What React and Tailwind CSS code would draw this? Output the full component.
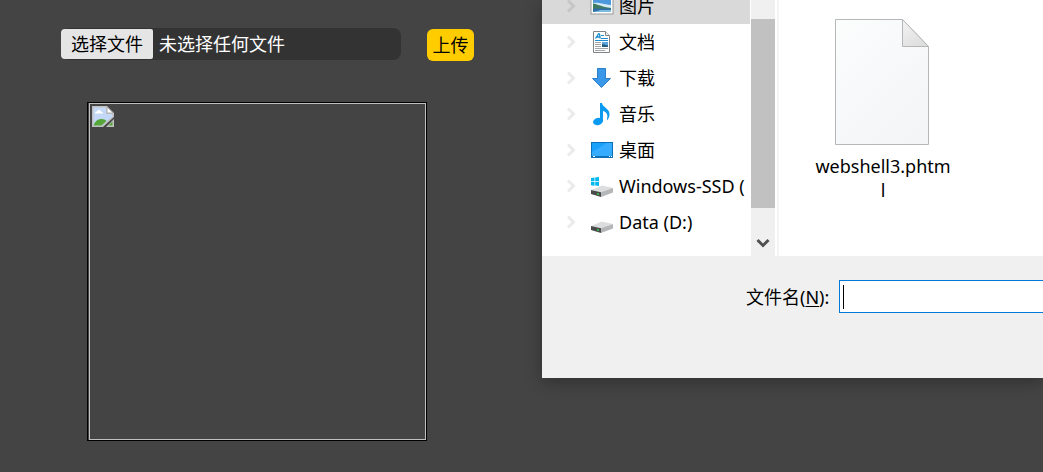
import React, { useState } from 'react';

const PicturesIcon = () => (
  <svg className="h-6 w-6" viewBox="0 0 24 24">
    <rect x="1" y="3" width="22" height="17" fill="#fff" stroke="#9a9a9a" />
    <path d="M3 5h18v13H3z" fill="#4d97dd" />
    <path d="M3 9c5-1 9 1 18 2v3H3z" fill="#d3e9f8" />
    <path d="M3 9.500c4 .5 9 3.500 18 4.500v1H3z" fill="#3f7a63" />
    <path d="M3 14.500h18V18H3z" fill="#2f6ea6" />
    <path d="M3 18l8-2h10v2z" fill="#7dbbe0" />
  </svg>
);

const DocumentsIcon = () => (
  <svg className="h-6 w-6" viewBox="0 0 24 24">
    <path d="M3.500 1.500h12l4 4v17h-16z" fill="#fff" stroke="#7f8488" />
    <path d="M15.500 1.500v4h4" fill="#eee" stroke="#7f8488" />
    <path d="M5.500 8.500l3-4.500h1l.7 4.500M6.700 7h3" fill="none" stroke="#1b8dd0" strokeWidth="1.300" />
    <path d="M11 5.500h3M11 8.500h7M5 10.500h13" stroke="#1b8dd0" />
    <path d="M5 12.500h6M5 14.500h6M5 16.500h6M5 18.500h13M5 20.500h10" stroke="#a3a6a9" />
    <path d="M12 12h6v5h-6z" fill="#5aa3df" />
    <path d="M12 14l6 1.500V17h-6z" fill="#245b7c" />
  </svg>
);

const DownloadsIcon = () => (
  <svg className="h-6 w-6" viewBox="0 0 24 24">
    <path d="M7.500 2.500h8v10h5L11.500 21.500l-9-9h5z" fill="#3b98e8" stroke="#2a7fcb" />
  </svg>
);

const MusicIcon = () => (
  <svg className="h-6 w-6" viewBox="0 0 24 24">
    <ellipse cx="8" cy="19.500" rx="5" ry="3.600" transform="rotate(-15 8 19.500)" fill="#0a9af0" />
    <path
      d="M10 1h2c.4 4 7.500 5.500 7.500 11 0 2.500-1 4.500-2 6-.5-.2-.7-.5-.6-.8 1.200-4 .4-6.700-3.900-8.200V19h-3z"
      fill="#0a9af0"
    />
  </svg>
);

const DesktopIcon = () => (
  <svg className="h-6 w-6" viewBox="0 0 24 24">
    <rect x="1.500" y="4.500" width="21" height="15" fill="#18a0fb" stroke="#0b70b8" />
    <path d="M2 14L17 5h5v13H2z" fill="#35acff" />
    <path d="M2 18.500h20" stroke="#0b70b8" />
    <path d="M3 18.500h2M19 18.500h1M21 18.500h1" stroke="#fff" />
  </svg>
);

const DriveIcon = ({ system = false }) => (
  <svg className="h-6 w-6" viewBox="0 0 24 24">
    <path d="M1 16l11-4.500L23 14l-12 4.500z" fill="#dcdddf" />
    <path d="M1 16l10 2.300v4.700L1 20z" fill="#4a4a4a" />
    <path d="M11 18.300L23 14v4.500L11 23z" fill="#b4b6b8" />
    <path d="M7 19l2 .5v1.500l-2-.5z" fill="#35d04a" />
    {system && <path d="M1 4l3.500-.5v3.700H1zM5.200 3.400L9 3v4.200H5.200zM1 8h3.500v3.700L1 11.200zM5.200 8H9v4l-3.800-.4z" fill="#00b7f0" />}
  </svg>
);

const ChevronIcon = ({ className }) => (
  <svg className={`h-4 w-3 ${className}`} viewBox="0 0 12 16" fill="none" stroke="currentColor" strokeWidth="3">
    <path d="M2 2.500L7.500 8 2 13.500" />
  </svg>
);

const FileIcon = () => (
  <svg className="h-[127px] w-24" viewBox="0 0 96 127">
    <defs>
      <linearGradient id="paper" x1="0" y1="0" x2="0.700" y2="1">
        <stop offset="0" stopColor="#fcfdfd" />
        <stop offset="1" stopColor="#f3f5f7" />
      </linearGradient>
      <linearGradient id="fold" x1="0" y1="0" x2="0.600" y2="1">
        <stop offset="0" stopColor="#f4f4f4" />
        <stop offset="1" stopColor="#dedede" />
      </linearGradient>
    </defs>
    <path d="M.5.5h67l26 27v98H.5z" fill="url(#paper)" stroke="#b4b6b8" />
    <path d="M67.500.5v27h26z" fill="url(#fold)" stroke="#b4b6b8" />
  </svg>
);

const BrokenImageIcon = () => (
  <svg className="h-6 w-6" viewBox="0 0 24 24">
    <path d="M1 1h15l7 7v4L12 22H1z" fill="#c0c0c0" />
    <path d="M2.500 2.500H15V9h6.500v2.500L11 20.500H2.500z" fill="#c3d8f7" />
    <path d="M4 8.500c0-1.500 1-2 2-2 .5-2 3.500-2 4 0 1.500 0 2 1 2 2z" fill="#fff" />
    <path d="M2.500 20.500C4 16 7 14 10.500 14c2.500 0 4 .8 5 2l-5 4.500z" fill="#57a639" />
    <path d="M16 2v6h6z" fill="#fff" stroke="#b0b0b0" />
    <path d="M23 14v8h-8z" fill="#c0c0c0" />
    <path d="M21.500 16.500v4h-4z" fill="#57a639" />
  </svg>
);

const folders = [
  { name: '图片', icon: <PicturesIcon />, selected: true },
  { name: '文档', icon: <DocumentsIcon /> },
  { name: '下载', icon: <DownloadsIcon /> },
  { name: '音乐', icon: <MusicIcon /> },
  { name: '桌面', icon: <DesktopIcon /> },
  { name: 'Windows-SSD (', icon: <DriveIcon system /> },
  { name: 'Data (D:)', icon: <DriveIcon /> }
];

const UploadForm = () => {
  const [fileName, setFileName] = useState('');

  return (
    <form className="shrink-0 pl-[61px] pr-[68px] pt-7" onSubmit={(e) => e.preventDefault()}>
      <div className="flex items-start gap-[26px]">
        <label className="relative flex h-8 w-[340px] items-center rounded-lg bg-[#333] text-white">
          <span className="flex h-[30px] w-[92px] items-center justify-center rounded-l rounded-r-xs bg-[#e5e5e5] text-black">
            选择文件
          </span>
          <span className="pl-1.5">{fileName || '未选择任何文件'}</span>
          <input type="file" className="sr-only" onChange={(e) => setFileName(e.target.files[0]?.name || '')} />
        </label>
        <button type="submit" className="mt-px h-8 w-[47px] rounded-md bg-[#fc0] text-black">
          上传
        </button>
      </div>

      <div className="ml-[26px] mt-[41px] w-[340px] border border-black pl-px">
        <div className="aspect-square border border-[#c0c0c0] p-px">
          <BrokenImageIcon />
        </div>
      </div>
    </form>
  );
};

const FolderTree = () => (
  <nav className="w-[209px] overflow-hidden pr-px">
    <ul className="-mt-3">
      {folders.map((folder) => (
        <li key={folder.name}>
          <button
            type="button"
            className={`flex h-9 w-full items-center whitespace-nowrap pl-6 ${folder.selected ? 'bg-[#d9d9d9]' : ''}`}
          >
            <ChevronIcon className={folder.selected ? 'shrink-0 text-[#c6c6c6]' : 'shrink-0 text-[#ebebeb]'} />
            <span className="ml-3 mr-[5px] shrink-0">{folder.icon}</span>
            {folder.name}
          </button>
        </li>
      ))}
    </ul>
  </nav>
);

const FileDialog = () => (
  <section className="h-fit min-w-0 flex-1 bg-[#f0f0f0] text-black shadow-[0_4px_16px_rgba(0,0,0,0.3)]">
    <div className="flex h-64 bg-white">
      <FolderTree />
      <div className="flex w-6 flex-col bg-[#f0f0f0] pt-[19px]">
        <div className="flex-1 bg-[#c1c1c1]" />
        <button type="button" aria-label="向下滚动" className="flex h-12 items-end justify-center pb-1">
          <ChevronIcon className="rotate-90 text-[#505050]" />
        </button>
      </div>
      <div className="ml-0.5 w-0.5 bg-[#f5f5f5]" />
      <div className="pl-[34px] pt-[19px]">
        <button type="button" className="flex w-[140px] flex-col items-center">
          <FileIcon />
          <span className="mt-2 w-[138px] break-all leading-6">webshell3.phtml</span>
        </button>
      </div>
    </div>

    <div className="flex items-center pb-[65px] pl-[204px] pt-6">
      <label htmlFor="filename" className="mr-2.5 shrink-0 whitespace-nowrap">
        文件名(<u className="underline-offset-2">N</u>):
      </label>
      <div className="flex h-[33px] min-w-0 flex-1 items-center border border-r-0 border-[#0078d7] bg-white pl-[3px]">
        <span className="h-6 w-px bg-black" />
        <input id="filename" type="text" className="h-full min-w-0 flex-1 px-1 outline-none" />
      </div>
    </div>
  </section>
);

const App = () => (
  <main className="flex min-h-screen overflow-hidden bg-[#444] font-['Noto_Sans','Noto_Sans_CJK_SC',sans-serif] text-[18px] leading-6">
    <UploadForm />
    <FileDialog />
  </main>
);

export default App;
